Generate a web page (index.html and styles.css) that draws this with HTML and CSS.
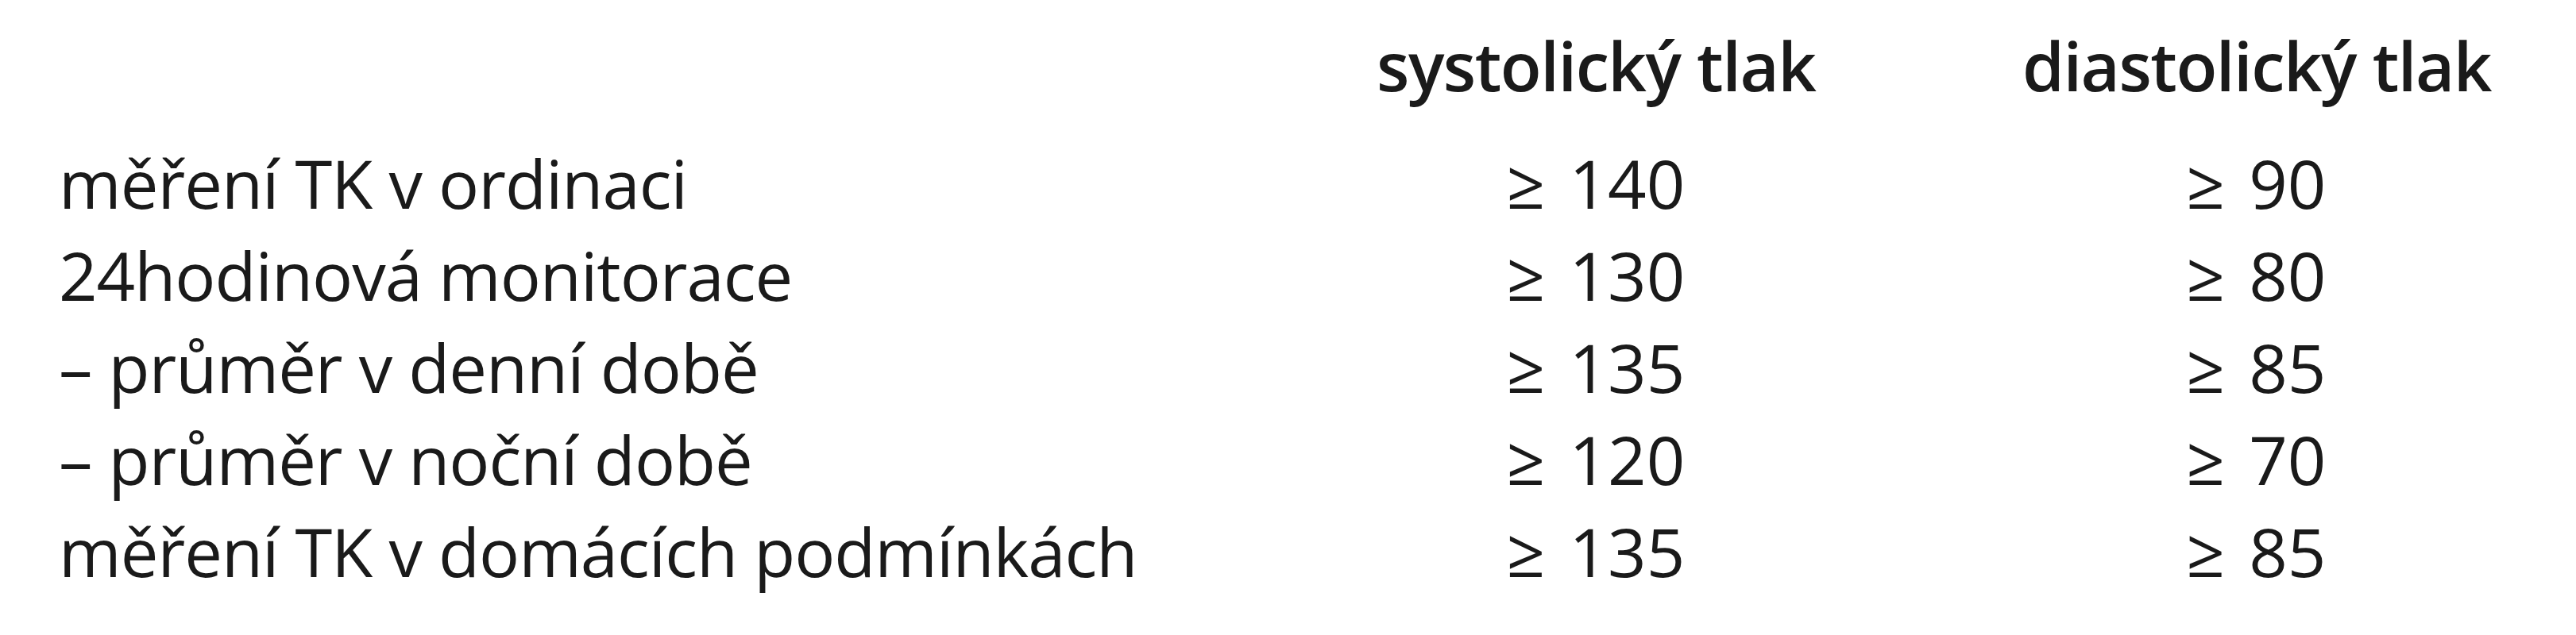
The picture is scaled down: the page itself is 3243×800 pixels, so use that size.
FILE: index.html
```html
<!DOCTYPE html>
<html lang="cs">
<head>
<meta charset="utf-8">
<title>Hodnoty TK</title>
<link rel="stylesheet" href="styles.css">
</head>
<body>
<div class="table">
  <div class="cell head"></div>
  <div class="cell head num">systolický tlak</div>
  <div class="cell head num">diastolický tlak</div>

  <div class="cell label first">měření TK v ordinaci</div>
  <div class="cell num first">≥ 140</div>
  <div class="cell num first">≥ 90</div>

  <div class="cell label">24hodinová monitorace</div>
  <div class="cell num">≥ 130</div>
  <div class="cell num">≥ 80</div>

  <div class="cell label">– průměr v denní době</div>
  <div class="cell num">≥ 135</div>
  <div class="cell num">≥ 85</div>

  <div class="cell label">– průměr v noční době</div>
  <div class="cell num">≥ 120</div>
  <div class="cell num">≥ 70</div>

  <div class="cell label">měření TK v domácích podmínkách</div>
  <div class="cell num">≥ 135</div>
  <div class="cell num">≥ 85</div>
</div>
</body>
</html>
```

FILE: styles.css
```css
html, body {
  margin: 0;
  padding: 0;
  background: #ffffff;
}

body {
  width: 3243px;
  height: 800px;
  overflow: hidden;
  font-family: "Open Sans", "DejaVu Sans", sans-serif;
  color: #1a1a1a;
}

.table {
  display: grid;
  grid-template-columns: 1398px 552px 589px;
  column-gap: 261px;
  padding: 24px 0 0 74px;
}

.cell {
  font-size: 85px;
  line-height: 116px;
  font-weight: 400;
  letter-spacing: -1px;
  white-space: nowrap;
}

.head {
  font-weight: 600;
  letter-spacing: -1.5px;
}

.num {
  text-align: center;
  letter-spacing: 0;
  word-spacing: 8px;
}

.head.num {
  letter-spacing: -1.5px;
  word-spacing: 0;
}

.first {
  margin-top: 32px;
}
```
